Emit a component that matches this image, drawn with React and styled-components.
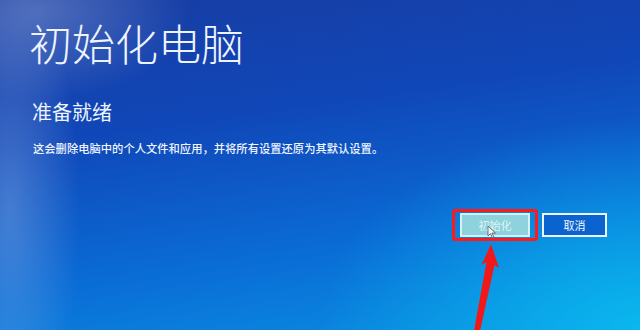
import React from "react";
import styled, { createGlobalStyle } from "styled-components";

const Global = createGlobalStyle`
  html, body {
    margin: 0;
    padding: 0;
    width: 640px;
    height: 330px;
    overflow: hidden;
  }
`;

const Screen = styled.div`
  position: relative;
  width: 640px;
  height: 330px;
  box-sizing: border-box;
  padding: 16px 33px 0 29px;
  display: flex;
  flex-direction: column;
  overflow: hidden;
  color: #eef4ff;
  font-family: "Noto Sans CJK SC", "Noto Sans", sans-serif;
  background:
    radial-gradient(ellipse 70px 240px at 10px 210px, rgba(170, 195, 235, 0.35), rgba(170, 195, 235, 0) 100%),
    radial-gradient(ellipse 150px 90px at 40px 10px, rgba(160, 178, 222, 0.4), rgba(160, 178, 222, 0) 100%),
    radial-gradient(ellipse 320px 210px at 640px 330px, rgba(10, 190, 240, 0.85), rgba(10, 190, 240, 0) 100%),
    linear-gradient(172deg, #183ca2 0%, #1047b8 35%, #0a6cd6 70%, #0a90e2 100%);
`;

const Title = styled.h1`
  margin: 0;
  font-size: 43px;
  font-weight: 300;
  line-height: 52px;
`;

const Subtitle = styled.h2`
  margin: 31px 0 0 3px;
  font-size: 20px;
  font-weight: 400;
  line-height: 26px;
`;

const Message = styled.p`
  margin: 15px 0 0 4px;
  font-size: 11.3px;
  line-height: 16px;
  font-weight: 500;
`;

const Actions = styled.div`
  margin-top: 53px;
  display: flex;
  justify-content: flex-end;
  align-items: center;
  gap: 4px;
`;

const Highlight = styled.div`
  position: relative;
  padding: 1px 5px;
  border: 3px solid #ff1a1a;
  border-radius: 3px;
`;

const Button = styled.button`
  box-sizing: border-box;
  width: ${(p) => p.$w}px;
  height: 24px;
  border: 2px solid ${(p) => (p.$primary ? "#d8f2f4" : "#eaf3ff")};
  background: ${(p) => (p.$primary ? "#8dd2dc" : "#0b63d0")};
  color: ${(p) => (p.$primary ? "#dff4f6" : "#f2f7ff")};
  font-family: "Noto Sans CJK SC", sans-serif;
  font-size: 11px;
  padding: 0;
  display: flex;
  align-items: center;
  justify-content: center;
`;

const Cursor = styled.svg`
  position: absolute;
  left: 32px;
  top: 13px;
`;

const Arrow = styled.svg`
  position: absolute;
  left: 466px;
  top: 241px;
`;

export default function App() {
  return (
    <Screen>
      <Global />
      <Title>初始化电脑</Title>
      <Subtitle>准备就绪</Subtitle>
      <Message>这会删除电脑中的个人文件和应用，并将所有设置还原为其默认设置。</Message>
      <Actions>
        <Highlight>
          <Button $primary $w={70}>初始化</Button>
          <Cursor width="10" height="14" viewBox="0 0 10 14">
            <path d="M1 1 L1 11 L3.5 8.5 L5.5 13 L7 12.3 L5 8 L8.5 8 Z" fill="#f4f4f4" stroke="#556" strokeWidth="0.8" />
          </Cursor>
        </Highlight>
        <Button $w={65}>取消</Button>
      </Actions>
      <Arrow width="40" height="90" viewBox="0 0 40 90">
        <path d="M25 3 L33 27 L28.5 24 L14 90 L8 90 L20.5 21 L15.5 24 Z" fill="#f01818" />
      </Arrow>
    </Screen>
  );
}
